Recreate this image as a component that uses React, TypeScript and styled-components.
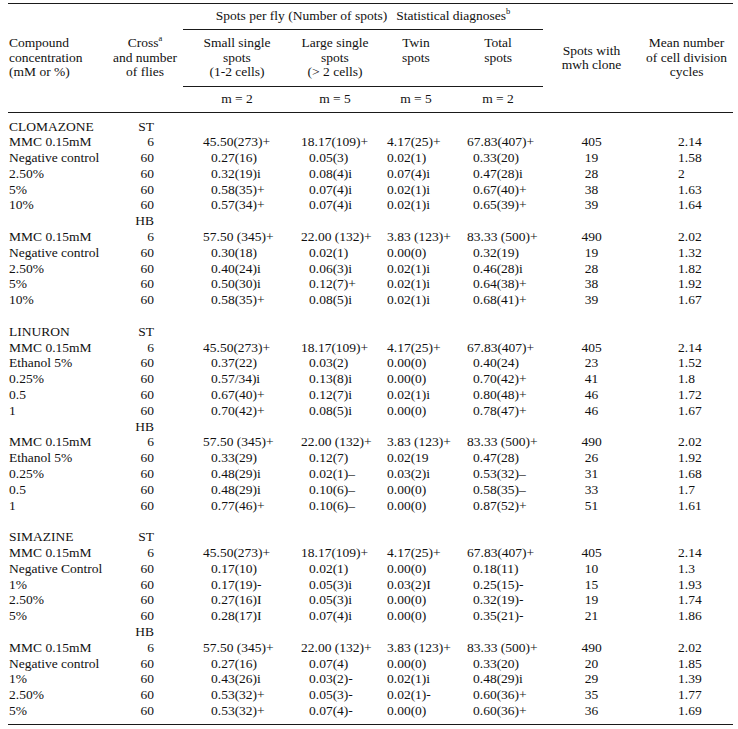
import React from "react";
import styled, { createGlobalStyle } from "styled-components";

const GlobalStyle = createGlobalStyle`
  body {
    margin: 0;
    background: #ffffff;
  }
`;

const Page = styled.div`
  padding: 3px 5px 0 8px;
  font-family: "Liberation Serif", "Times New Roman", serif;
  font-size: 13.5px;
  color: #111111;
`;

const Table = styled.table`
  width: 725px;
  table-layout: fixed;
  border-collapse: collapse;
  border-top: 1px solid #1a1a1a;
  border-bottom: 1px solid #1a1a1a;
`;

interface HeadCellProps {
  $align?: "left" | "center";
  $h?: number;
  $rule?: boolean;
}
const HeadCell = styled.th<HeadCellProps>`
  font-weight: normal;
  padding: 0;
  padding-left: ${p => (p.$align === "left" ? "1px" : "0")};
  text-align: ${p => p.$align || "center"};
  vertical-align: middle;
  line-height: 14.5px;
  white-space: nowrap;
  ${p => p.$h && `height: ${p.$h}px;`}
  ${p => p.$rule && `border-bottom: 1px solid #1a1a1a;`}
`;

const Gap = styled.span`
  display: inline-block;
  width: 9px;
`;

const Sup = styled.sup`
  font-size: 8.5px;
  line-height: 0;
  position: relative;
  top: -1px;
`;

interface CellProps {
  $align: "left" | "right" | "center";
  $pad: number;
}
const Cell = styled.td<CellProps>`
  padding: 0;
  height: 15.8px;
  line-height: 15.8px;
  white-space: nowrap;
  text-align: ${p => p.$align};
  ${p => p.$align === "right" ? `padding-right: ${p.$pad}px;` : `padding-left: ${p.$pad}px;`}
`;

const Spacer = styled.tr<{ $h: number }>`
  height: ${p => p.$h}px;
`;

type Row = [string, string, string, string, string, string, string, string];

interface Block {
  cross: string;
  rows: Row[];
}
interface Section {
  name: string;
  blocks: Block[];
}

const sections: Section[] = [
  {
    name: "CLOMAZONE",
    blocks: [
      {
        cross: "ST",
        rows: [
          ["MMC 0.15mM", "6", "45.50(273)+", "18.17(109)+", "4.17(25)+", "67.83(407)+", "405", "2.14"],
          ["Negative control", "60", "0.27(16)", "0.05(3)", "0.02(1)", "0.33(20)", "19", "1.58"],
          ["2.50%", "60", "0.32(19)i", "0.08(4)i", "0.07(4)i", "0.47(28)i", "28", "2"],
          ["5%", "60", "0.58(35)+", "0.07(4)i", "0.02(1)i", "0.67(40)+", "38", "1.63"],
          ["10%", "60", "0.57(34)+", "0.07(4)i", "0.02(1)i", "0.65(39)+", "39", "1.64"],
        ],
      },
      {
        cross: "HB",
        rows: [
          ["MMC 0.15mM", "6", "57.50 (345)+", "22.00 (132)+", "3.83 (123)+", "83.33 (500)+", "490", "2.02"],
          ["Negative control", "60", "0.30(18)", "0.02(1)", "0.00(0)", "0.32(19)", "19", "1.32"],
          ["2.50%", "60", "0.40(24)i", "0.06(3)i", "0.02(1)i", "0.46(28)i", "28", "1.82"],
          ["5%", "60", "0.50(30)i", "0.12(7)+", "0.02(1)i", "0.64(38)+", "38", "1.92"],
          ["10%", "60", "0.58(35)+", "0.08(5)i", "0.02(1)i", "0.68(41)+", "39", "1.67"],
        ],
      },
    ],
  },
  {
    name: "LINURON",
    blocks: [
      {
        cross: "ST",
        rows: [
          ["MMC 0.15mM", "6", "45.50(273)+", "18.17(109)+", "4.17(25)+", "67.83(407)+", "405", "2.14"],
          ["Ethanol 5%", "60", "0.37(22)", "0.03(2)", "0.00(0)", "0.40(24)", "23", "1.52"],
          ["0.25%", "60", "0.57/34)i", "0.13(8)i", "0.00(0)", "0.70(42)+", "41", "1.8"],
          ["0.5", "60", "0.67(40)+", "0.12(7)i", "0.02(1)i", "0.80(48)+", "46", "1.72"],
          ["1", "60", "0.70(42)+", "0.08(5)i", "0.00(0)", "0.78(47)+", "46", "1.67"],
        ],
      },
      {
        cross: "HB",
        rows: [
          ["MMC 0.15mM", "6", "57.50 (345)+", "22.00 (132)+", "3.83 (123)+", "83.33 (500)+", "490", "2.02"],
          ["Ethanol 5%", "60", "0.33(29)", "0.12(7)", "0.02(19", "0.47(28)", "26", "1.92"],
          ["0.25%", "60", "0.48(29)i", "0.02(1)–", "0.03(2)i", "0.53(32)–", "31", "1.68"],
          ["0.5", "60", "0.48(29)i", "0.10(6)–", "0.00(0)", "0.58(35)–", "33", "1.7"],
          ["1", "60", "0.77(46)+", "0.10(6)–", "0.00(0)", "0.87(52)+", "51", "1.61"],
        ],
      },
    ],
  },
  {
    name: "SIMAZINE",
    blocks: [
      {
        cross: "ST",
        rows: [
          ["MMC 0.15mM", "6", "45.50(273)+", "18.17(109)+", "4.17(25)+", "67.83(407)+", "405", "2.14"],
          ["Negative Control", "60", "0.17(10)", "0.02(1)", "0.00(0)", "0.18(11)", "10", "1.3"],
          ["1%", "60", "0.17(19)-", "0.05(3)i", "0.03(2)I", "0.25(15)-", "15", "1.93"],
          ["2.50%", "60", "0.27(16)I", "0.05(3)i", "0.00(0)", "0.32(19)-", "19", "1.74"],
          ["5%", "60", "0.28(17)I", "0.07(4)i", "0.00(0)", "0.35(21)-", "21", "1.86"],
        ],
      },
      {
        cross: "HB",
        rows: [
          ["MMC 0.15mM", "6", "57.50 (345)+", "22.00 (132)+", "3.83 (123)+", "83.33 (500)+", "490", "2.02"],
          ["Negative control", "60", "0.27(16)", "0.07(4)", "0.00(0)", "0.33(20)", "20", "1.85"],
          ["1%", "60", "0.43(26)i", "0.03(2)-", "0.02(1)i", "0.48(29)i", "29", "1.39"],
          ["2.50%", "60", "0.53(32)+", "0.05(3)-", "0.02(1)-", "0.60(36)+", "35", "1.77"],
          ["5%", "60", "0.53(32)+", "0.07(4)-", "0.00(0)", "0.60(36)+", "36", "1.69"],
        ],
      },
    ],
  },
];

// column widths and where the values sit inside each column
const widths = [99, 76, 108, 88, 74, 90, 97, 93];
const columns: { align: "left" | "right" | "center"; pad: number; lead: number }[] = [
  { align: "left", pad: 1, lead: 1 },
  { align: "right", pad: 29, lead: 29 },
  { align: "left", pad: 28, lead: 20 },
  { align: "left", pad: 18, lead: 10 },
  { align: "left", pad: 8, lead: 8 },
  { align: "left", pad: 20, lead: 14 },
  { align: "center", pad: 0, lead: 0 },
  { align: "left", pad: 38, lead: 38 },
];

const DataRow = ({ cells, lead }: { cells: string[]; lead?: boolean }) => (
  <tr>
    {cells.map((c, i) => (
      <Cell key={i} $align={columns[i].align} $pad={lead ? columns[i].lead : columns[i].pad}>
        {c}
      </Cell>
    ))}
  </tr>
);

const App = () => {
  return (
    <Page>
      <GlobalStyle />
      <Table>
        <colgroup>
          {widths.map((w, i) => (
            <col key={i} style={{ width: w }} />
          ))}
        </colgroup>
        <thead>
          <tr>
            <HeadCell rowSpan={3} $align="left" $rule>
              Compound<br />concentration<br />(mM or %)
            </HeadCell>
            <HeadCell rowSpan={3} $rule>
              Cross<Sup>a</Sup><br />and number<br />of flies
            </HeadCell>
            <HeadCell colSpan={4} $h={25} $rule>
              Spots per fly (Number of spots)<Gap />Statistical diagnoses<Sup>b</Sup>
            </HeadCell>
            <HeadCell rowSpan={3} $rule>
              Spots with<br />mwh clone
            </HeadCell>
            <HeadCell rowSpan={3} $rule>
              Mean number<br />of cell division<br />cycles
            </HeadCell>
          </tr>
          <tr>
            <HeadCell $h={56} $rule>Small single<br />spots<br />(1-2 cells)</HeadCell>
            <HeadCell $rule>Large single<br />spots<br />(&gt; 2 cells)</HeadCell>
            <HeadCell $rule>Twin<br />spots<br /><br /></HeadCell>
            <HeadCell $rule>Total<br />spots<br /><br /></HeadCell>
          </tr>
          <tr>
            <HeadCell $h={25} $rule>m = 2</HeadCell>
            <HeadCell $rule>m = 5</HeadCell>
            <HeadCell $rule>m = 5</HeadCell>
            <HeadCell $rule>m = 2</HeadCell>
          </tr>
        </thead>
        <tbody>
          <Spacer $h={6} />
          {sections.map((s, si) => (
            <React.Fragment key={s.name}>
              {si > 0 && <DataRow cells={["", "", "", "", "", "", "", ""]} />}
              {s.blocks.map((b, bi) => (
                <React.Fragment key={b.cross}>
                  <DataRow cells={[bi === 0 ? s.name : "", b.cross, "", "", "", "", "", ""]} />
                  {b.rows.map((r, ri) => (
                    <DataRow key={ri} cells={r} lead={ri === 0} />
                  ))}
                </React.Fragment>
              ))}
            </React.Fragment>
          ))}
          <Spacer $h={6} />
        </tbody>
      </Table>
    </Page>
  );
};

export default App;
